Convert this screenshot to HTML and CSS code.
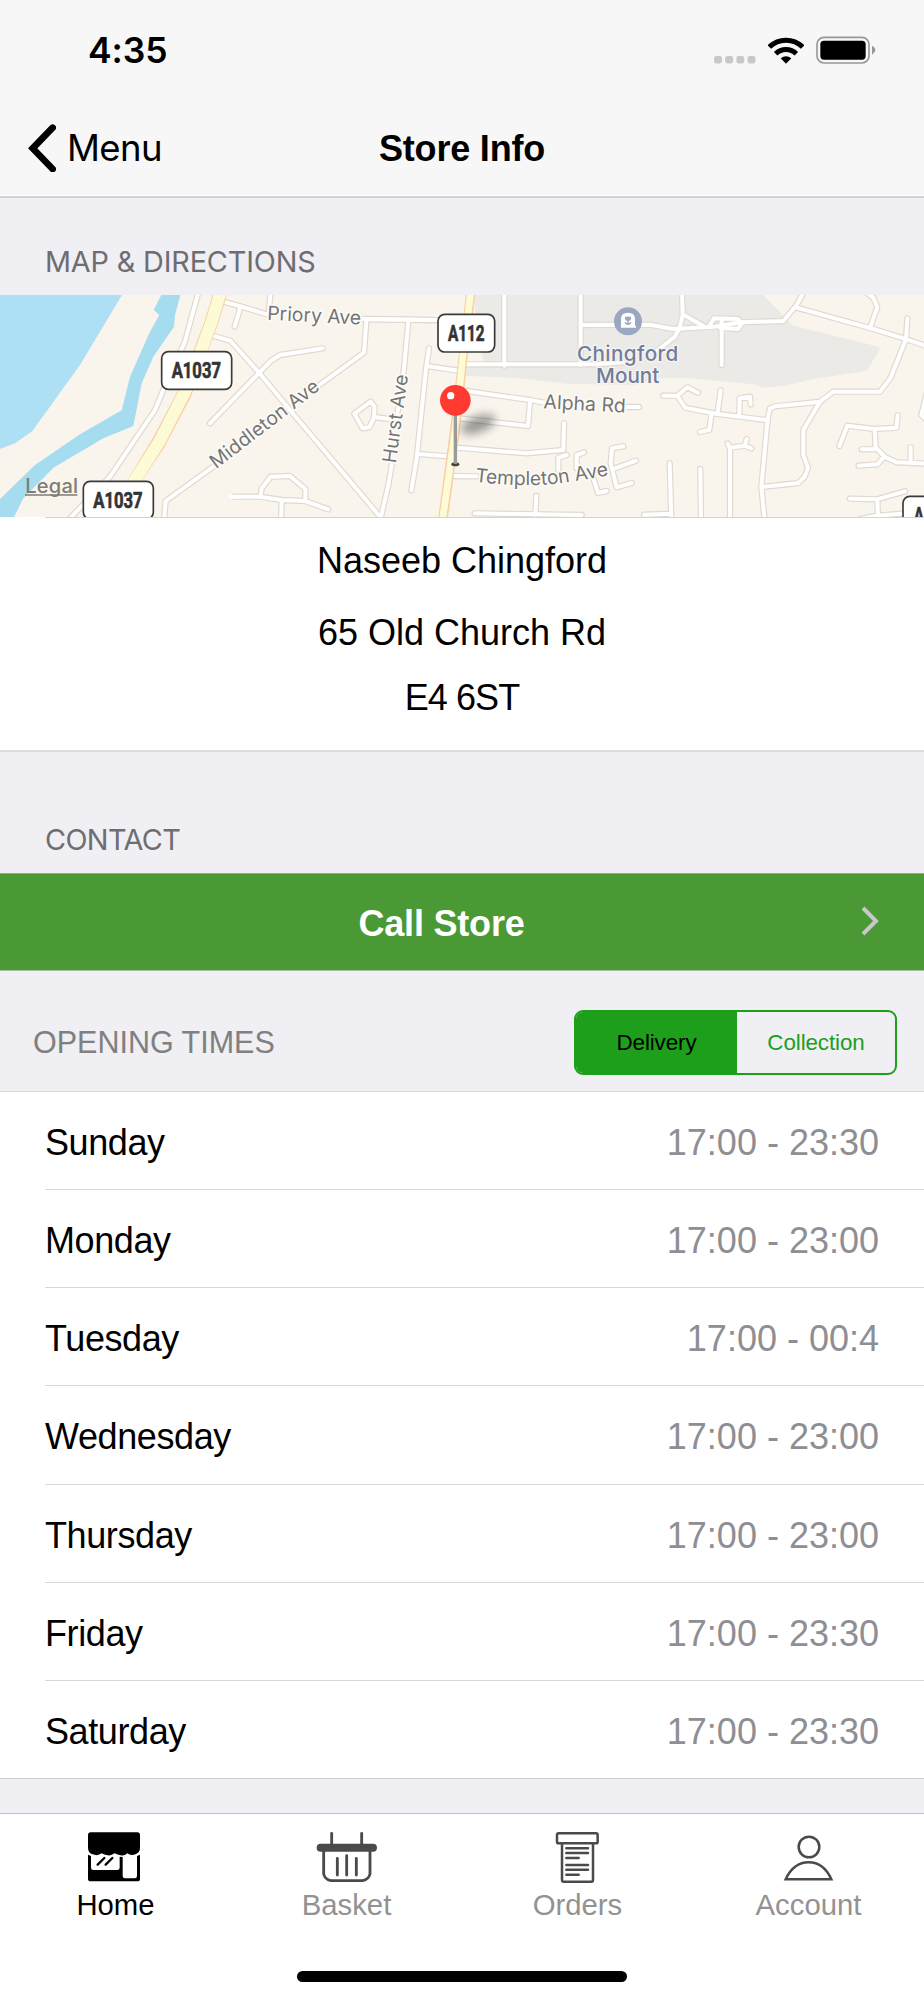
FILE: index.html
```html
<!DOCTYPE html>
<html lang="en">
<head>
    <meta charset="UTF-8">
    <meta name="viewport" content="width=device-width, initial-scale=1.0">
    <title>Store Info</title>
    <link rel="stylesheet" href="styles.css">
</head>
<body>
    <header class="top-bar">
        <div class="status-bar">
            <span class="clock">4:35</span>
            <div class="status-icons">
                <svg class="signal" width="42" height="8" viewBox="0 0 42 8">
                    <rect x="0" y="0" width="8" height="7.5" rx="2.4"/>
                    <rect x="11.2" y="0" width="8" height="7.5" rx="2.4"/>
                    <rect x="22.3" y="0" width="8" height="7.5" rx="2.4"/>
                    <rect x="33.5" y="0" width="8" height="7.5" rx="2.4"/>
                </svg>
                <svg class="wifi" width="36" height="27" viewBox="0 0 108 81">
                    <path d="M4 30A71 71 0 0 1 104 30" stroke-width="15"/>
                    <path d="M23 50A44 44 0 0 1 85 50" stroke-width="15"/>
                    <path class="dot" d="M38 64Q54 51 70 64L54 80Z"/>
                </svg>
                <svg class="battery" width="60" height="28" viewBox="0 0 180 84">
                    <rect class="shell" x="3" y="4" width="156" height="77" rx="21"/>
                    <rect x="13" y="14" width="136" height="57" rx="11"/>
                    <path class="tip" d="M168 29Q178 34 178 42Q178 50 168 56Z"/>
                </svg>
            </div>
        </div>
        <nav class="nav-bar">
            <a class="back">
                <svg width="28" height="48" viewBox="0 0 84 144">
                    <path d="M74 11L14 73L74 135"/>
                </svg>
                <span>Menu</span>
            </a>
            <h1>Store Info</h1>
        </nav>
    </header>

    <main>
        <h2 class="section-title">MAP &amp; DIRECTIONS</h2>
        <svg class="map" viewBox="0 30 2772 666" preserveAspectRatio="none">
            <defs>
                <filter id="blur" x="-50%" y="-50%" width="200%" height="200%"><feGaussianBlur stdDeviation="14"/></filter>
                <g id="roads">
                    <path d="M596 20L575 95L555 170L530 225L490 315L465 375L330 575L205 705"/>
                    <path d="M670 50L722 64L800 88M722 64L704 125M812 20L806 82M1070 102L1340 106"/>
                    <path d="M640 152L692 168L776 262L870 375L1140 695"/>
                    <path d="M630 415L812 228L840 210L968 190"/>
                    <path d="M492 705L497 648L640 545M950 306L1092 203L1099 110M1100 102L1300 105"/>
                    <path d="M703 635L780 635L845 645L915 648L985 673M782 632L785 610L812 575L870 573L916 612V645M845 650L843 705"/>
                    <path d="M1225 110L1212 250L1190 400M1175 540L1165 600L1142 700"/>
                    <path d="M1063 386L1112 350L1124 365L1122 398L1108 427L1088 430ZM1122 396L1168 402"/>
                    <path d="M1287 190L1278 250L1250 520L1234 616M1280 243L1376 257M1254 507L1345 514"/>
                    <path d="M1400 318L1590 345L1634 353M1590 350L1584 423L1375 400M1370 488L1580 505L1690 495L1692 415M1355 573L1430 574"/>
                    <path d="M1424 685L1745 690M1606 690L1609 632"/>
                    <path d="M1675 555V518L1700 510M1730 550V510L1752 502M1780 580L1794 624L1817 619"/>
                    <path d="M1513 20V242M1390 238H1790L1870 232M1742 20V240M1742 120L1950 119L2020 132L2142 125L2225 112L2350 108L2390 60L2412 20"/>
                    <path d="M2046 20L2048 90L2040 125L2025 155L1970 198M2052 90L2110 123M2130 120L2142 100L2214 102L2225 116L2214 132L2160 128M2165 102V240"/>
                    <path d="M2390 68L2620 132L2720 163L2790 187M2610 130L2632 66L2620 38L2595 20M2722 100L2718 162L2672 278L2640 320H2500L2460 350L2410 435V510L2424 548L2414 575L2395 594L2285 606"/>
                    <path d="M1840 366H1917M1990 332H2032L2062 307L2094 323M2032 332L2055 368L2148 386L2304 406M2162 316L2153 382M2134 390L2128 435L2100 441M2218 393L2219 340L2250 335L2252 358"/>
                    <path d="M2462 350L2325 364L2310 370L2303 400L2284 606L2294 705"/>
                    <path d="M1870 484L1836 490L1832 535L1850 607L1895 594M1845 550L1908 527M1808 620L1820 618"/>
                    <path d="M2009 535L2014 705M1932 689L2012 686M2101 552L2103 705M2183 476L2190 490V705M2190 488L2234 482L2240 462M2234 482L2254 490"/>
                    <path d="M2518 483L2542 422L2624 432L2689 428L2693 391M2624 434L2627 487L2655 516L2690 532L2800 537M2585 493L2624 493M2576 542L2632 538L2650 518M2732 487V530"/>
                    <path d="M2550 641L2630 643L2715 619M2632 645L2634 695M2580 702L2630 692L2720 685"/>
                    <path d="M2784 310L2764 390L2785 410"/>
                </g>
                <g id="main-roads">
                    <path d="M662 20L635 110L602 200L560 310L478 470L395 600" stroke-width="36"/>
                    <path d="M1412 20L1390 200L1365 440L1328 700" stroke-width="20"/>
                </g>
            </defs>
            <rect class="land" x="0" y="30" width="2772" height="666"/>
            <path class="lake" d="M0 30H366L240 240L97 438L45 475L0 492Z"/>
            <path class="river" d="M484 30H541L525 90L522 125L460 215L425 295L400 423L310 460L160 548L70 640L42 696H0V642L105 540L240 448L365 376L390 275L450 140L478 90L461 75Z"/>
            <path class="cemetery" d="M1426 30H2290L2380 122L2642 187L2600 258L2440 282L2350 303L2290 308L2262 298L2070 280L1980 280L1900 300L1700 296L1560 280L1392 272L1405 236H1455L1425 150Z"/>
            <use href="#roads" class="road-casing"/>
            <use href="#roads" class="road-fill"/>
            <path class="road-fill" d="M692 635H714" stroke-width="14"/>
            <path class="main-casing" d="M643 20L616 110L582 200L540 310L460 462L377 598M681 20L654 110L620 200L570 335L490 487L410 605"/>
            <path class="main-casing" d="M1401 20L1380 200L1352 440L1317 700M1425 20L1402 200L1377 440L1341 700"/>
            <use href="#main-roads" class="main-fill"/>

            <g class="street">
                <text transform="translate(801 104) rotate(3)" textLength="282">Priory Ave</text>
                <text transform="translate(648 553) rotate(-37.5)" textLength="396">Middleton Ave</text>
                <text transform="translate(1187 536) rotate(-82)" textLength="268">Hurst Ave</text>
                <text transform="translate(1630 370) rotate(3)" textLength="246">Alpha Rd</text>
                <text><textPath href="#templeton" textLength="405">Templeton Ave</textPath></text>
            </g>
            <path id="templeton" d="M1424 590Q1590 610 1700 592Q1780 580 1840 568" fill="none"/>

            <g class="shield">
                <rect x="485" y="200" width="210" height="113" rx="20"/>
                <text x="515" y="279" textLength="148" lengthAdjust="spacingAndGlyphs">A1037</text>
                <rect x="250" y="589" width="210" height="113" rx="20"/>
                <text x="280" y="668" textLength="148" lengthAdjust="spacingAndGlyphs">A1037</text>
                <rect x="1314" y="88" width="170" height="113" rx="20"/>
                <text x="1344" y="168" textLength="110" lengthAdjust="spacingAndGlyphs">A112</text>
                <rect x="2709" y="634" width="170" height="113" rx="20"/>
                <text x="2741" y="713" textLength="110" lengthAdjust="spacingAndGlyphs">A112</text>
            </g>

            <circle class="poi" cx="1884" cy="109" r="42"/>
            <path class="tomb" d="M1859 128H1863V102Q1863 83 1884 83Q1905 83 1905 102V122H1908V128Z"/>
            <path class="poi" d="M1875 94L1880 97L1884 93L1888 97L1893 94V102Q1893 107 1886 108V114L1895 110Q1893 119 1884 120Q1875 119 1873 110L1882 114V108Q1875 107 1875 102Z"/>
            <g class="poi-label">
                <text x="1883" y="228" textLength="304">Chingford</text>
                <text x="1883" y="295" textLength="190">Mount</text>
            </g>
            <text class="legal" x="76" y="623" textLength="158">Legal</text>
            <path class="legal-line" d="M75 630H232"/>

            <ellipse class="pin-shadow" cx="1434" cy="418" rx="54" ry="24" transform="rotate(-20 1434 418)" filter="url(#blur)"/>
            <ellipse class="pin-foot" cx="1366" cy="538" rx="12" ry="6"/>
            <path class="pin-stem" d="M1366 380V537"/>
            <circle class="pin-head" cx="1366" cy="346" r="46"/>
            <circle class="pin-shine" cx="1352" cy="332" r="11"/>
        </svg>

        <address class="address">
            <p>Naseeb Chingford</p>
            <p>65 Old Church Rd</p>
            <p class="postcode">E4 6ST</p>
        </address>

        <h2 class="section-title contact">CONTACT</h2>
        <a class="call">
            <span>Call Store</span>
            <svg width="20" height="32" viewBox="0 0 20 32">
                <path d="M2 3L15 16L2 29"/>
            </svg>
        </a>

        <div class="times-header">
            <h2>OPENING TIMES</h2>
            <div class="segmented">
                <button class="selected">Delivery</button>
                <button>Collection</button>
            </div>
        </div>
        <ul class="times">
            <li><span>Sunday</span><time>17:00 - 23:30</time></li>
            <li><span>Monday</span><time>17:00 - 23:00</time></li>
            <li><span>Tuesday</span><time>17:00 - 00:4</time></li>
            <li><span>Wednesday</span><time>17:00 - 23:00</time></li>
            <li><span>Thursday</span><time>17:00 - 23:00</time></li>
            <li><span>Friday</span><time>17:00 - 23:30</time></li>
            <li><span>Saturday</span><time>17:00 - 23:30</time></li>
        </ul>
    </main>

    <footer class="tab-bar">
        <div class="tabs">
            <a class="tab active">
                <svg width="64" height="52" viewBox="252 183 192 156">
                    <path class="solid" d="M272 187H412Q420 187 420 195V233Q420 247 408 252Q393 259 382 250Q372 259 362 256Q352 255 344 250Q333 258 323 256Q312 255 305 250Q293 259 278 253Q264 248 264 233V195Q264 187 272 187Z"/>
                    <path class="solid" fill-rule="evenodd" d="M264 254L273 258V293Q273 300 280 300H352Q359 300 359 293V260L368 261V318Q368 325 375 325H404Q411 325 411 318V258L420 254V326Q420 334 412 334H272Q264 334 264 326Z"/>
                    <path class="glint" d="M293 284L313 264M317 284L337 264"/>
                </svg>
                <span>Home</span>
            </a>
            <a class="tab">
                <svg width="64" height="52" viewBox="945 183 192 156">
                    <path class="line-8" d="M995 190V228M1085 190V228M1012 265V315M1040 257V315M1069 265V315"/>
                    <rect class="grey" x="950" y="221" width="181" height="24" rx="12"/>
                    <path class="line-8" d="M971 240V312Q975 328 992 332H1088Q1106 328 1110 312V240"/>
                </svg>
                <span>Basket</span>
            </a>
            <a class="tab">
                <svg width="64" height="52" viewBox="252 183 192 156">
                    <rect class="line-7" x="285" y="190" width="122" height="30" rx="5"/>
                    <path class="line-7" d="M300 220V330Q300 335 305 335H388Q393 335 393 330V220"/>
                    <path class="line-7" d="M313 235H378M313 249H378M313 264H350M313 285H378M313 299H378M313 314H350"/>
                </svg>
                <span>Orders</span>
            </a>
            <a class="tab">
                <svg width="64" height="52" viewBox="945 183 192 156">
                    <circle class="line-7" cx="1041" cy="231" r="31"/>
                    <path class="account-body" d="M971 328Q995 277 1040 277Q1085 277 1108 328Z"/>
                </svg>
                <span>Account</span>
            </a>
        </div>
        <div class="home-indicator"></div>
    </footer>
</body>
</html>
```
FILE: styles.css
```css
* {
    box-sizing: border-box;
}

body {
    margin: 0;
    width: 924px;
    height: 2000px;
    display: flex;
    flex-direction: column;
    overflow: hidden;
    background: #efeff4;
    color: #000;
    font-family: "Liberation Sans", Arial, sans-serif;
    font-size: 36px;
}

h1, h2, p, ul {
    margin: 0;
    padding: 0;
}

svg {
    display: block;
    flex: none;
}

/* header */
.top-bar {
    height: 198px;
    background: #f7f7f7;
    border-bottom: 2px solid #d2d2d5;
    box-shadow: inset 0 -1px 0 #fff;
}

.status-bar {
    display: flex;
    justify-content: space-between;
    height: 99px;
    padding: 30px 48px 0 88px;
}

.clock {
    font-family: Inter, sans-serif;
    font-size: 35.5px;
    font-weight: 600;
    line-height: 42px;
    letter-spacing: -0.1px;
}

.status-icons {
    display: flex;
    align-items: flex-start;
    padding-top: 6px;
}

.signal {
    margin: 20px 12px 0 0;
    fill: #c8c8c8;
}

.wifi {
    margin: 1px 12px 0 0;
    fill: none;
    stroke: #000;
}

.wifi .dot {
    fill: #000;
    stroke: none;
}

.battery .shell {
    fill: none;
    stroke: #989898;
    stroke-width: 5;
}

.battery .tip {
    fill: #989898;
}

.nav-bar {
    display: grid;
    grid-template-columns: 1fr auto 1fr;
    align-items: center;
    height: 97px;
    padding: 0 28px;
}

.back {
    display: flex;
    align-items: center;
    gap: 10px;
    font-family: Inter, sans-serif;
    font-size: 36.5px;
    letter-spacing: -0.6px;
    line-height: 48px;
}

.back span {
    padding-left: 1px;
}

.back svg {
    fill: none;
    stroke: #000;
    stroke-width: 20;
    stroke-linecap: round;
    stroke-linejoin: miter;
}

.nav-bar h1 {
    padding-top: 2px;
    font-size: 36px;
    line-height: 48px;
    letter-spacing: -0.2px;
}

.section-title {
    height: 97px;
    padding: 48px 45px 0;
    font-family: Inter, sans-serif;
    font-size: 28.8px;
    font-weight: 400;
    line-height: 32px;
    letter-spacing: -0.15px;
    color: #6d6d72;
}

/* map */
.map {
    width: 924px;
    height: 222px;
    font-family: Inter, sans-serif;
}

.land {
    fill: #f9f4ec;
}

.lake {
    fill: #ade0f4;
}

.river {
    fill: #a6dcef;
}

.cemetery {
    fill: #ebeae6;
}

.road-casing, .road-fill {
    fill: none;
    stroke: #e0d9d0;
    stroke-width: 19;
    stroke-linecap: round;
    stroke-linejoin: round;
}

.road-fill {
    stroke: #fff;
    stroke-width: 12;
}

.main-casing {
    fill: none;
    stroke: #f8cf9e;
    stroke-width: 5;
}

.main-fill {
    fill: none;
    stroke: #fdfad6;
}

.street {
    font-size: 58px;
    font-weight: 400;
    fill: #747474;
    stroke: #fdfbf7;
    stroke-width: 10;
    stroke-linejoin: round;
    paint-order: stroke;
}

.shield rect {
    fill: #fff;
    stroke: #3a3a3a;
    stroke-width: 5;
}

.shield text {
    font-family: Roboto, sans-serif;
    font-size: 65px;
    font-weight: 700;
    fill: #333;
    stroke: #333;
    stroke-width: 2;
}

.poi {
    fill: #9ba6c0;
}

.tomb {
    fill: #fff;
}

.poi-label {
    font-size: 62px;
    font-weight: 500;
    text-anchor: middle;
    fill: #707d9c;
    stroke: #f6f4f0;
    stroke-width: 8;
    paint-order: stroke;
}

.legal {
    font-size: 60px;
    font-weight: 500;
    fill: #7d7d78;
}

.legal-line {
    stroke: #7d7d78;
    stroke-width: 4;
}

.pin-shadow {
    fill: #000;
    opacity: 0.38;
}

.pin-foot {
    fill: #444;
}

.pin-stem {
    stroke: #9a9a9c;
    stroke-width: 10;
}

.pin-head {
    fill: #ff3a30;
}

.pin-shine {
    fill: #fff;
}

.address {
    height: 235px;
    padding-top: 22px;
    background: #fff linear-gradient(#d4d4d6, #d4d4d6) 45px 0 / 100% 1px no-repeat;
    border-bottom: 2px solid #dcdcdf;
    font-style: normal;
    line-height: 44px;
    text-align: center;
}

.address p + p {
    margin-top: 28px;
}

.address .postcode {
    margin-top: 21px;
    letter-spacing: -0.9px;
}

/* contact */
.contact {
    height: 121px;
    padding-top: 72px;
    letter-spacing: -0.6px;
}

.call {
    display: flex;
    align-items: center;
    height: 98px;
    padding: 3px 43px 0 0;
    background: #4b9935;
    border-top: 1px solid #93aa91;
    border-bottom: 1px solid #a5bda2;
    color: #fff;
    font-weight: 700;
}

.call span {
    flex: 1;
    padding-left: 22px;
    text-align: center;
    letter-spacing: -0.2px;
}

.call svg {
    margin-top: -5px;
    fill: none;
    stroke: #c7c7cc;
    stroke-width: 4;
}

/* opening times */
.times-header {
    display: flex;
    justify-content: space-between;
    align-items: center;
    height: 120px;
    padding: 23px 27px 0 33px;
}

.times-header h2 {
    font-size: 30.5px;
    font-weight: 400;
    color: #808080;
}

.segmented {
    display: flex;
    width: 323px;
    height: 65px;
    margin-top: -1px;
    border: 2px solid #1d9f1b;
    border-radius: 9px;
    overflow: hidden;
}

.segmented button {
    flex: 1;
    margin: 0;
    padding: 2px 0 0;
    border: none;
    background: none;
    color: #1d9f1b;
    font-family: inherit;
    font-size: 22.4px;
    letter-spacing: -0.1px;
}

.segmented .selected {
    flex: none;
    width: 161px;
    background: #1d9f1b;
    color: #000;
}

.times {
    height: 688px;
    display: flex;
    flex-direction: column;
    padding-left: 45px;
    background: #fff;
    border-top: 1px solid #d8d8db;
    border-bottom: 1px solid #cfcfd2;
    list-style: none;
}

.times li {
    flex: 1;
    display: flex;
    justify-content: space-between;
    align-items: center;
    padding: 5px 45px 0 0;
    border-bottom: 1px solid #d8d8da;
}

.times li:last-child {
    border-bottom: none;
}

.times span {
    letter-spacing: -0.4px;
}

.times time {
    color: #8e8e93;
}

/* tab bar */
.tab-bar {
    height: 187px;
    margin-top: auto;
    background: #fff;
    border-top: 1px solid #bebec1;
}

.tabs {
    display: flex;
    height: 157px;
    padding-top: 17px;
}

.tab {
    flex: 1;
    display: flex;
    flex-direction: column;
    align-items: center;
    gap: 5px;
    color: #929292;
    font-size: 29.3px;
    line-height: 34px;
}

.tab.active {
    color: #000;
}

.tab .solid {
    fill: #000;
}

.tab .grey {
    fill: #4a4a4a;
}

.glint, .line-8, .line-7, .account-body {
    fill: none;
    stroke: #4a4a4a;
    stroke-width: 8.5;
    stroke-linecap: round;
}

.glint {
    stroke: #000;
    stroke-width: 7;
}

.line-7, .account-body {
    stroke-width: 7.5;
}

.home-indicator {
    width: 330px;
    height: 11px;
    margin: 0 auto;
    border-radius: 6px;
    background: #000;
}
```
